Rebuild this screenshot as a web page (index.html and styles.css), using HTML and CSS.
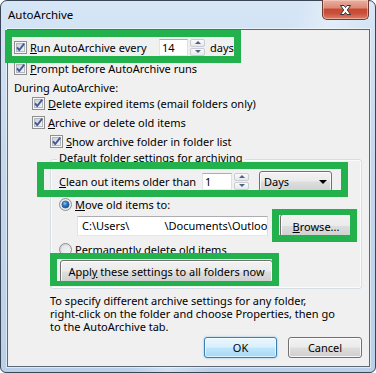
FILE: index.html
```html
<!DOCTYPE html>
<html lang="en">
<head>
    <meta charset="UTF-8">
    <title>AutoArchive</title>
    <link rel="stylesheet" href="styles.css">
</head>
<body>

    <!-- shared shapes for checkboxes and radio buttons -->
    <svg class="defs" width="0" height="0">
        <defs>
            <linearGradient id="boxFill" x1="0" y1="0" x2="1" y2="1">
                <stop offset="0" stop-color="#c9ced5"/>
                <stop offset="1" stop-color="#f7f7f7"/>
            </linearGradient>
            <radialGradient id="dotFill" cx="0.4" cy="0.35" r="0.7">
                <stop offset="0" stop-color="#8cc4f0"/>
                <stop offset="0.5" stop-color="#2a73bd"/>
                <stop offset="1" stop-color="#154f91"/>
            </radialGradient>
            <symbol id="checkOn" viewBox="0 0 13 13">
                <rect x="0.5" y="0.5" width="12" height="12" fill="#f6f6f6" stroke="#8e8f8f"/>
                <rect x="2.5" y="2.5" width="8" height="8" fill="url(#boxFill)" stroke="#b3b7bd"/>
                <path d="M3 6.4 L5.3 9 L10.2 2.7" fill="none" stroke="#435898" stroke-width="1.9" stroke-linejoin="round"/>
            </symbol>
            <symbol id="radioOn" viewBox="0 0 13 13">
                <circle cx="6.5" cy="6.5" r="6" fill="#ececec" stroke="#8e8f8f"/>
                <circle cx="6.5" cy="6.5" r="3.6" fill="url(#dotFill)" stroke="#1c4f86" stroke-width="0.6"/>
            </symbol>
            <symbol id="radioOff" viewBox="0 0 13 13">
                <circle cx="6.5" cy="6.5" r="6" fill="url(#boxFill)" stroke="#8e8f8f"/>
                <circle cx="6.5" cy="6.5" r="4" fill="#f2f2f2" opacity="0.6"/>
            </symbol>
        </defs>
    </svg>

    <div class="window">
        <div class="titlebar">
            <span class="title">AutoArchive</span>
            <div class="close-btn">
                <svg width="13" height="12" viewBox="-0.5 -0.5 13 12">
                    <path d="M1 1 H4.5 L6 3 L7.5 1 H11 L7.8 5.5 L11 10 H7.5 L6 8 L4.5 10 H1 L4.2 5.5 Z" fill="#fff" stroke="#333" stroke-width="1"/>
                </svg>
            </div>
        </div>

        <div class="client">
            <div class="row row-run">
                <svg class="check"><use href="#checkOn"/></svg>
                <span class="run-label"><u>R</u>un AutoArchive every</span>
                <span class="spin">
                    <span class="textbox spin-val">14</span>
                    <span class="spin-arrows"><span class="spin-up"></span><span class="spin-down"></span></span>
                </span>
                <span class="unit">days</span>
            </div>
            <div class="row row-prompt">
                <svg class="check"><use href="#checkOn"/></svg>
                <span><u>P</u>rompt before AutoArchive runs</span>
            </div>
            <div class="row row-during">During AutoArchive:</div>
            <div class="row row-delete">
                <svg class="check"><use href="#checkOn"/></svg>
                <span><u>D</u>elete expired items (email folders only)</span>
            </div>
            <div class="row row-archive">
                <svg class="check"><use href="#checkOn"/></svg>
                <span><u>A</u>rchive or delete old items</span>
            </div>
            <div class="row row-show">
                <svg class="check"><use href="#checkOn"/></svg>
                <span><u>S</u>how archive folder in folder list</span>
            </div>

            <div class="group">
                <div class="group-title"><span>Default folder settings for archiving</span></div>
                <div class="row row-clean">
                    <span class="clean-label"><u>C</u>lean out items older than</span>
                    <span class="spin">
                        <span class="textbox spin-val spin-small">1</span>
                        <span class="spin-arrows"><span class="spin-up"></span><span class="spin-down"></span></span>
                    </span>
                    <span class="combo">Days<span class="combo-arrow"></span></span>
                </div>
                <div class="row row-move">
                    <svg class="radio"><use href="#radioOn"/></svg>
                    <span><u>M</u>ove old items to:</span>
                </div>
                <div class="row row-path">
                    <div class="textbox path"><span class="path-user">C:\Users\</span><span class="redact"></span>\Documents\Outlook Files\archive.pst</div>
                    <div class="btn btn-browse"><span><u>B</u>rowse...</span></div>
                </div>
                <div class="row row-perm">
                    <svg class="radio"><use href="#radioOff"/></svg>
                    <span>Permanently delete old items</span>
                </div>
                <div class="btn btn-apply"><span>Appl<u>y</u> these settings to all folders now</span></div>
            </div>

            <p class="note">To specify different archive settings for any folder,<br>right-click on the folder and choose Properties, then go<br>to the AutoArchive tab.</p>

            <div class="actions">
                <div class="btn btn-default">OK</div>
                <div class="btn btn-cancel">Cancel</div>
            </div>
        </div>
    </div>

    <!-- green highlight boxes drawn over the dialog -->
    <div class="mark mark-run"></div>
    <div class="mark mark-clean"></div>
    <div class="mark mark-browse"></div>
    <div class="mark mark-apply"></div>

</body>
</html>
```

FILE: styles.css
```css
body {
    margin: 0;
    width: 376px;
    height: 373px;
    overflow: hidden;
    position: relative;
    background: #fff;
    font-family: "Noto Sans", "Liberation Sans", sans-serif;
    font-size: 11px;
    color: #000;
}
.defs {
    position: absolute;
}
.window {
    box-sizing: border-box;
    width: 376px;
    height: 373px;
    border: 1px solid #3a4656;
    border-radius: 7px 7px 6px 6px;
    padding: 0 5px 5px 6px;
    display: flex;
    flex-direction: column;
    background:
        linear-gradient(115deg, rgba(255,255,255,0) 55%, rgba(255,255,255,0.35) 62%, rgba(255,255,255,0) 70%),
        linear-gradient(180deg, #d6e6f6 0%, #c4d8ee 40%, #b9d0e8 100%);
}
.titlebar {
    height: 28px;
    display: flex;
    justify-content: space-between;
    align-items: flex-start;
}
.title {
    margin: 6px 0 0 1px;
    font-size: 11.5px;
    line-height: 16px;
}
.close-btn {
    box-sizing: border-box;
    width: 47px;
    height: 20px;
    margin: -1px 1px 0 0;
    border: 1px solid #6e3a33;
    border-top: none;
    border-radius: 0 0 5px 5px;
    display: flex;
    align-items: center;
    justify-content: center;
    background: linear-gradient(180deg, #eab0a2 0%, #dc8b78 40%, #c74a30 50%, #c9503a 70%, #dc806a 100%);
    box-shadow: inset 0 0 0 1px rgba(255,220,210,0.5);
}
.client {
    flex: 1;
    border: 1px solid #5d6977;
    background: #f0f0f0;
    box-shadow: 0 0 0 1px rgba(255,255,255,0.5);
    display: flex;
    flex-direction: column;
}
.row {
    display: flex;
    align-items: center;
    height: 16px;
    white-space: nowrap;
}
.check, .radio {
    width: 13px;
    height: 13px;
    flex: none;
    margin-right: 3px;
}
.row-run {
    height: 18px;
    margin: 8px 0 0 6px;
}
.row-prompt {
    margin: 4px 0 0 6px;
}
.row-during {
    margin: 3px 0 0 6px;
}
.row-delete {
    margin: 0 0 0 24px;
}
.row-archive {
    margin: 3px 0 0 24px;
}
.row-show {
    margin: 3px 0 0 42px;
}
.run-label {
    width: 129px;
}
.unit {
    margin-left: 5px;
}

/* text boxes and spinners */
.textbox {
    box-sizing: border-box;
    background: #fff;
    border: 1px solid;
    border-color: #abadb3 #dbdfe6 #e3e9ef #e2e3ea;
}
.spin {
    display: flex;
    align-items: center;
}
.spin-val {
    width: 29px;
    height: 17px;
    line-height: 15px;
    padding-left: 2px;
}
.spin-arrows {
    margin-left: 2px;
    width: 15px;
    height: 17px;
    display: flex;
    flex-direction: column;
    gap: 1px;
}
.spin-up, .spin-down {
    box-sizing: border-box;
    flex: 1;
    border: 1px solid #c9ccd2;
    border-radius: 2px;
    background: linear-gradient(180deg, #fbfbfb, #e6e8eb);
    display: flex;
    align-items: center;
    justify-content: center;
}
.spin-up::after, .spin-down::after {
    content: "";
    border-left: 3px solid transparent;
    border-right: 3px solid transparent;
}
.spin-up::after {
    border-bottom: 3px solid #4c6086;
}
.spin-down::after {
    border-top: 3px solid #4c6086;
}

/* group box */
.group {
    box-sizing: border-box;
    width: 312px;
    height: 130px;
    margin: 10px 0 0 42px;
    border: 1px solid #d5dfe5;
    border-radius: 3px;
    box-shadow: inset 0 0 0 1px #fbfbfb;
    display: flex;
    flex-direction: column;
}
.group-title {
    height: 14px;
    line-height: 14px;
    margin: -9px 0 0 6px;
}
.group-title span {
    background: #f0f0f0;
    padding: 0 2px;
}
.row-clean {
    height: 22px;
    margin: 5px 0 0 8px;
}
.clean-label {
    width: 143px;
}
.spin-small {
    width: 30px;
}
.combo {
    box-sizing: border-box;
    position: relative;
    width: 73px;
    height: 21px;
    margin-left: 10px;
    padding-left: 4px;
    line-height: 19px;
    border: 1px solid #707070;
    border-radius: 3px;
    background: linear-gradient(180deg, #f3f3f3 0%, #ebebeb 48%, #dddddd 52%, #d0d0d0 100%);
    box-shadow: inset 0 0 0 1px rgba(255,255,255,0.7);
}
.combo-arrow {
    position: absolute;
    right: 4px;
    top: 8px;
    border-left: 4px solid transparent;
    border-right: 4px solid transparent;
    border-top: 4px solid #000;
}
.row-move {
    margin: 4px 0 0 8px;
}
.row-path {
    height: 20px;
    margin: 4px 0 0 26px;
    align-items: stretch;
}
.path {
    width: 191px;
    padding-left: 4px;
    line-height: 18px;
    overflow: hidden;
}
.redact {
    display: inline-block;
    width: 35px;
}
.row-perm {
    margin: 5px 0 0 8px;
}

/* buttons */
.btn {
    box-sizing: border-box;
    display: flex;
    align-items: center;
    justify-content: center;
    border: 1px solid #707070;
    border-radius: 3px;
    background: linear-gradient(180deg, #f2f2f2 0%, #ebebeb 48%, #dddddd 52%, #cfcfcf 100%);
    box-shadow: inset 0 0 0 1px rgba(255,255,255,0.8);
    white-space: nowrap;
}
.btn-browse {
    width: 72px;
    margin: -2px 0 -2px 12px;
}
.btn-apply {
    width: 213px;
    height: 23px;
    margin: 3px 0 0 9px;
}
.note {
    margin: 5px 0 0 42px;
    line-height: 13px;
}
.actions {
    display: flex;
    justify-content: flex-end;
    gap: 11px;
    margin: 4px 7px 0 0;
}
.actions .btn {
    width: 73px;
    height: 21px;
}
.actions .btn-cancel {
    width: 74px;
}
.btn-default {
    border-color: #3c7fb1;
    background: linear-gradient(180deg, #eaf6fd 0%, #d9f0fc 48%, #bee6fd 52%, #a7d9f5 100%);
    box-shadow: inset 0 0 0 1px rgba(255,255,255,0.6), 0 0 2px #6fb6e6;
}

/* annotation boxes */
.mark {
    position: absolute;
    box-sizing: border-box;
    border: 7px solid #22b14c;
}
.mark-run {
    left: 5px;
    top: 30px;
    width: 236px;
    height: 33px;
}
.mark-clean {
    left: 37px;
    top: 162px;
    width: 311px;
    height: 35px;
}
.mark-browse {
    left: 272px;
    top: 209px;
    width: 85px;
    height: 33px;
    border-top-width: 6px;
}
.mark-apply {
    left: 50px;
    top: 253px;
    width: 229px;
    height: 33px;
    border-top-width: 6px;
    border-bottom-width: 5px;
}
```
